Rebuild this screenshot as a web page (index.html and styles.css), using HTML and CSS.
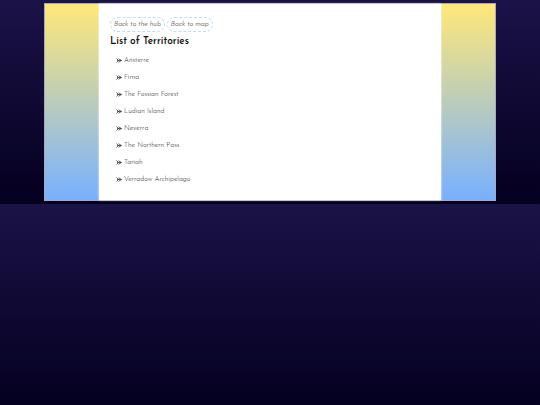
FILE: index.html
```
<!DOCTYPE html>
<html lang="en">
<head>
<meta charset="utf-8">
<meta name="viewport" content="width=device-width, initial-scale=1">
<title>List of Territories</title>
<link rel="stylesheet" href="styles.css">
</head>
<body>
<svg class="sprite" aria-hidden="true">
<symbol id="arrow" viewBox="0 0 12 10"><path d="M1 1l4 4-4 4M5 1.500L11 5 5 8.500M2 5h9" fill="none" stroke="currentColor" stroke-width="1.500"/></symbol>
</svg>
<div class="frame">
<main class="content">
<nav class="links">
<a class="pill" href="#hub">Back to the hub</a>
<a class="pill" href="#map">Back to map</a>
</nav>
<h1 class="title">List of Territories</h1>
<ul class="territories">
<li><svg class="bullet" aria-hidden="true"><use href="#arrow"/></svg><a href="#ansterre">Ansterre</a></li>
<li><svg class="bullet" aria-hidden="true"><use href="#arrow"/></svg><a href="#firna">Firna</a></li>
<li><svg class="bullet" aria-hidden="true"><use href="#arrow"/></svg><a href="#fossian">The Fossian Forest</a></li>
<li><svg class="bullet" aria-hidden="true"><use href="#arrow"/></svg><a href="#ludian">Ludian Island</a></li>
<li><svg class="bullet" aria-hidden="true"><use href="#arrow"/></svg><a href="#neverra">Neverra</a></li>
<li><svg class="bullet" aria-hidden="true"><use href="#arrow"/></svg><a href="#northern">The Northern Pass</a></li>
<li><svg class="bullet" aria-hidden="true"><use href="#arrow"/></svg><a href="#tariah">Tariah</a></li>
<li><svg class="bullet" aria-hidden="true"><use href="#arrow"/></svg><a href="#verradow">Verradow Archipelago</a></li>
</ul>
</main>
</div>
</body>
</html>
```
FILE: styles.css
```
* {
  box-sizing: border-box;
}

html {
  background: linear-gradient(#1b1247, #040020);
}

body {
  margin: 0;
  padding: 3px 0;
  font-family: "Josefin Sans", Lato, sans-serif;
  font-size: 7px;
  font-weight: 300;
  line-height: 9px;
  color: #111;
}

a {
  color: inherit;
  text-decoration: none;
}

.sprite {
  display: none;
}

.frame {
  margin: 0 44px;
  padding: 0 10%;
  border: 1px solid #a9a8c0;
  background: linear-gradient(#ffe878, #78b0ff);
}

.content {
  padding: 13px 11px 12px;
  background: #fff;
  box-shadow: 0 0 2px #fff;
}

.links {
  display: flex;
  gap: 2px;
}

.pill {
  padding: 2px 3px;
  border: 1px dashed #c5d9f2;
  border-radius: 8px;
  font-style: italic;
}

.title {
  margin: 3px 0;
  font-size: 10px;
  font-weight: 600;
  line-height: 14px;
  color: #111;
}

.territories {
  margin: 0;
  padding: 0 0 0 6px;
  list-style: none;
}

.territories li {
  display: flex;
  align-items: center;
  gap: 2px;
  padding: 4px 0;
}

.bullet {
  width: 6px;
  height: 5px;
  color: #333;
}
```
